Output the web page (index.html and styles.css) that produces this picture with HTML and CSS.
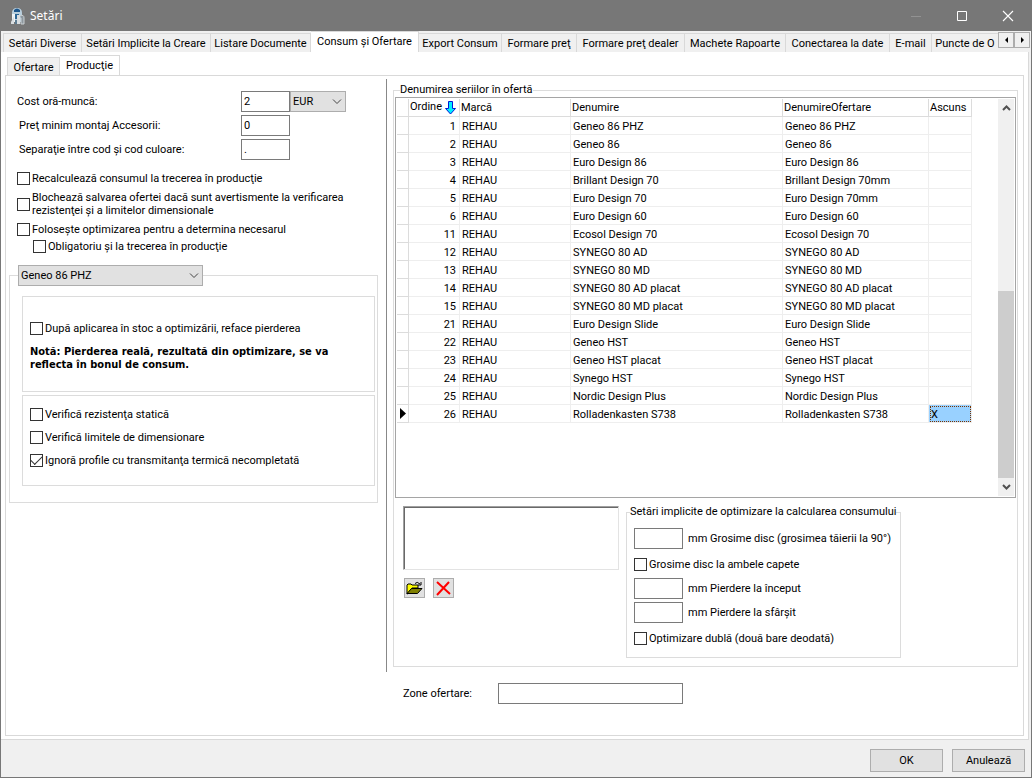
FILE: index.html
```html
<!DOCTYPE html>
<html lang="ro">
<head>
<meta charset="utf-8">
<title>Setări</title>
<link rel="stylesheet" href="styles.css">
</head>
<body>
<div class="window">
  <header class="titlebar">
    <svg class="app-icon" width="16" height="18" viewBox="0 0 16 18"><path d="M2 6Q2 1 7 1Q12 1 12 6V15H2Z" fill="#b9cfdd"/><path d="M4 3Q7 0 10 3V5H4Z" fill="#1c568c"/><path d="M2 7h3v8H2z" fill="#eef3f6"/><path d="M5 7h4v5H5z" fill="#2c6696"/><path d="M1 15L4 9V17H1ZM7 8h3v9H7z" fill="#d9dde0"/><path d="M10 9Q14 7 14 11V17H11V11" fill="#8d979e" stroke="#c9cfd2"/><path d="M5 13h2v4H5z" fill="#5d7c92"/></svg>
    <h1 class="title">Setări</h1>
    <div class="window-buttons">
      <button class="window-button" aria-label="Minimizare"><svg width="12" height="12" viewBox="0 0 12 12"><path d="M1 6.500H11" stroke="#929292"/></svg></button>
      <button class="window-button" aria-label="Maximizare"><svg width="12" height="12" viewBox="0 0 12 12"><path d="M1.500 1.500H10.500V10.500H1.500Z" fill="none" stroke="#fff"/></svg></button>
      <button class="window-button" aria-label="Închidere"><svg width="12" height="12" viewBox="0 0 12 12"><path d="M1 1L11 11M11 1L1 11" fill="none" stroke="#fff" stroke-width="1.100"/></svg></button>
    </div>
  </header>

  <nav class="main-tabs">
    <div class="tab-strip" role="tablist">
      <button class="tab" role="tab">Setări Diverse</button>
      <button class="tab" role="tab">Setări Implicite la Creare</button>
      <button class="tab" role="tab">Listare Documente</button>
      <button class="tab tab-active" role="tab" aria-selected="true">Consum şi Ofertare</button>
      <button class="tab" role="tab">Export Consum</button>
      <button class="tab" role="tab">Formare preţ</button>
      <button class="tab" role="tab">Formare preţ dealer</button>
      <button class="tab" role="tab">Machete Rapoarte</button>
      <button class="tab" role="tab">Conectarea la date</button>
      <button class="tab" role="tab">E-mail</button>
      <button class="tab" role="tab">Puncte de O</button>
    </div>
    <div class="tab-scroll">
      <button class="scroll-button" aria-label="Înapoi"><svg width="5" height="8" viewBox="0 0 5 8"><path d="M4 1V7L1 4Z"/></svg></button>
      <button class="scroll-button" aria-label="Înainte"><svg width="5" height="8" viewBox="0 0 5 8"><path d="M1 1V7L4 4Z"/></svg></button>
    </div>
  </nav>

  <main class="page">
    <div class="sub-tabs" role="tablist">
      <button class="tab" role="tab">Ofertare</button>
      <button class="tab tab-active" role="tab" aria-selected="true">Producţie</button>
    </div>
    <div class="sub-page">
      <section class="left">
        <div class="costs">
          <label for="cost">Cost oră-muncă:</label>
          <div class="cost-fields">
            <input class="field" id="cost" value="2">
            <div class="combo combo-currency"><select aria-label="Moneda"><option>EUR</option></select><svg width="10" height="6" viewBox="0 0 10 6"><path d="M1 0.500L5 4.500L9 0.500"/></svg></div>
          </div>
          <label class="cost-label" for="montaj">Preţ minim montaj Accesorii:</label>
          <input class="field" id="montaj" value="0">
          <label class="cost-label" for="sep">Separaţie între cod şi cod culoare:</label>
          <input class="field" id="sep" value=".">
        </div>
        <div class="options">
          <label class="check"><input type="checkbox">Recalculează consumul la trecerea în producţie</label>
          <label class="check check-tall"><input type="checkbox"><span>Blochează salvarea ofertei dacă sunt avertismente la verificarea<br>rezistenţei şi a limitelor dimensionale</span></label>
          <label class="check"><input type="checkbox">Foloseşte optimizarea pentru a determina necesarul</label>
          <label class="check check-nested"><input type="checkbox">Obligatoriu şi la trecerea în producţie</label>
        </div>
        <fieldset class="group series-group">
          <legend><div class="combo"><select aria-label="Serie"><option>Geneo 86 PHZ</option></select><svg width="10" height="6" viewBox="0 0 10 6"><path d="M1 0.500L5 4.500L9 0.500"/></svg></div></legend>
          <div class="box loss-box">
            <label class="check"><input type="checkbox">După aplicarea în stoc a optimizării, reface pierderea</label>
            <p class="note">Notă: Pierderea reală, rezultată din optimizare, se va<br>reflecta în bonul de consum.</p>
          </div>
          <div class="box verify-box">
            <label class="check"><input type="checkbox">Verifică rezistenţa statică</label>
            <label class="check"><input type="checkbox">Verifică limitele de dimensionare</label>
            <label class="check"><input type="checkbox" checked>Ignoră profile cu transmitanţa termică necompletată</label>
          </div>
        </fieldset>
      </section>

      <section class="right">
        <fieldset class="group names-group">
          <legend>Denumirea seriilor în ofertă</legend>
          <div class="grid-frame">
            <div class="grid-area">
              <table class="grid">
                <colgroup><col class="col-mark"><col class="col-order"><col class="col-brand"><col class="col-name"><col class="col-offer"><col class="col-hidden"></colgroup>
                <thead><tr><th></th><th>Ordine <svg class="sort" width="11" height="14" viewBox="0 0 11 14"><path d="M3.500 0.500H7.500V7.500H10.500L5.500 13L0.500 7.500H3.500Z" fill="#00f0ff" stroke="#0018d8"/></svg></th><th>Marcă</th><th>Denumire</th><th>DenumireOfertare</th><th>Ascuns</th></tr></thead>
                <tbody>
                  <tr><td></td><td>1</td><td>REHAU</td><td>Geneo 86 PHZ</td><td>Geneo 86 PHZ</td><td></td></tr>
                  <tr><td></td><td>2</td><td>REHAU</td><td>Geneo 86</td><td>Geneo 86</td><td></td></tr>
                  <tr><td></td><td>3</td><td>REHAU</td><td>Euro Design 86</td><td>Euro Design 86</td><td></td></tr>
                  <tr><td></td><td>4</td><td>REHAU</td><td>Brillant Design 70</td><td>Brillant Design 70mm</td><td></td></tr>
                  <tr><td></td><td>5</td><td>REHAU</td><td>Euro Design 70</td><td>Euro Design 70mm</td><td></td></tr>
                  <tr><td></td><td>6</td><td>REHAU</td><td>Euro Design 60</td><td>Euro Design 60</td><td></td></tr>
                  <tr><td></td><td>11</td><td>REHAU</td><td>Ecosol Design 70</td><td>Ecosol Design 70</td><td></td></tr>
                  <tr><td></td><td>12</td><td>REHAU</td><td>SYNEGO 80 AD</td><td>SYNEGO 80 AD</td><td></td></tr>
                  <tr><td></td><td>13</td><td>REHAU</td><td>SYNEGO 80 MD</td><td>SYNEGO 80 MD</td><td></td></tr>
                  <tr><td></td><td>14</td><td>REHAU</td><td>SYNEGO 80 AD placat</td><td>SYNEGO 80 AD placat</td><td></td></tr>
                  <tr><td></td><td>15</td><td>REHAU</td><td>SYNEGO 80 MD placat</td><td>SYNEGO 80 MD placat</td><td></td></tr>
                  <tr><td></td><td>21</td><td>REHAU</td><td>Euro Design Slide</td><td>Euro Design Slide</td><td></td></tr>
                  <tr><td></td><td>22</td><td>REHAU</td><td>Geneo HST</td><td>Geneo HST</td><td></td></tr>
                  <tr><td></td><td>23</td><td>REHAU</td><td>Geneo HST placat</td><td>Geneo HST placat</td><td></td></tr>
                  <tr><td></td><td>24</td><td>REHAU</td><td>Synego HST</td><td>Synego HST</td><td></td></tr>
                  <tr><td></td><td>25</td><td>REHAU</td><td>Nordic Design Plus</td><td>Nordic Design Plus</td><td></td></tr>
                  <tr><td><svg class="marker" width="6" height="11" viewBox="0 0 6 11"><path d="M0 0L6 5.500L0 11Z"/></svg></td><td>26</td><td>REHAU</td><td>Rolladenkasten S738</td><td>Rolladenkasten S738</td><td class="cell-selected">X</td></tr>
                </tbody>
              </table>
            </div>
            <div class="scrollbar">
              <svg width="9" height="6" viewBox="0 0 9 6"><path d="M1 5L4.500 1.500L8 5"/></svg>
              <div class="thumb"></div>
              <svg width="9" height="6" viewBox="0 0 9 6"><path d="M1 1L4.500 4.500L8 1"/></svg>
            </div>
          </div>
          <div class="lower">
            <div class="files">
              <div class="file-list" role="listbox" aria-label="Fişiere"></div>
              <div class="file-buttons">
                <button class="tool" aria-label="Deschide"><svg width="17" height="14" viewBox="0 0 17 14"><path d="M1 13V4L2 3H5L6 4H12V7H6L1.500 13Z" fill="#ff0" stroke="#000"/><path d="M5.500 7.500H16L11.500 12.500H1Z" fill="#808000" stroke="#000"/><path d="M9 2.500Q11 0 14 3M15 1V4H12" fill="none" stroke="#000"/></svg></button>
                <button class="tool" aria-label="Şterge"><svg width="15" height="15" viewBox="0 0 15 15"><path d="M1 1L14 13M13 1L1 14" fill="none" stroke="#f00" stroke-width="2"/></svg></button>
              </div>
            </div>
            <fieldset class="group optim-group">
              <legend>Setări implicite de optimizare la calcularea consumului</legend>
              <div class="optim-row"><input class="field" id="disc"><label for="disc">mm Grosime disc (grosimea tăierii la 90°)</label></div>
              <label class="check"><input type="checkbox">Grosime disc la ambele capete</label>
              <div class="optim-row"><input class="field" id="inc"><label for="inc">mm Pierdere la început</label></div>
              <div class="optim-row"><input class="field" id="sf"><label for="sf">mm Pierdere la sfârşit</label></div>
              <label class="check"><input type="checkbox">Optimizare dublă (două bare deodată)</label>
            </fieldset>
          </div>
        </fieldset>
        <div class="zone"><label for="zone">Zone ofertare:</label><input class="field zone-field" id="zone"></div>
      </section>
    </div>
  </main>

  <footer class="actions">
    <button class="action">OK</button>
    <button class="action">Anulează</button>
  </footer>
</div>
</body>
</html>
```
FILE: styles.css
```css
* { box-sizing: border-box; }

body {
  margin: 0;
  font: 11px/13px Tahoma, Roboto, sans-serif;
  color: #000;
}

button, input, select { font: inherit; color: inherit; margin: 0; border-radius: 0; }
button { padding: 0; }
label, legend, button { white-space: nowrap; }

.window {
  display: flex;
  flex-direction: column;
  min-height: 100vh;
  border: 1px solid #777;
  background: #f0f0f0;
}

/* Title bar */
.titlebar {
  display: flex;
  align-items: center;
  height: 30px;
  padding-left: 9px;
  background: #777;
  color: #fff;
}
.title { margin: 0 0 0 4px; font: 12px/16px "Noto Sans", sans-serif; }
.window-buttons { display: flex; margin-left: auto; }
.window-button {
  display: grid;
  place-items: center;
  width: 46px;
  height: 28px;
  border: 0;
  background: none;
}

/* Tabs */
.main-tabs { display: flex; align-items: flex-end; height: 21px; padding-left: 2px; }
.tab-strip {
  display: grid;
  grid-template-columns: 79px 129px 100px 108px 83px 75px 108px 101px 104px 42px 67px;
  align-items: end;
  flex: 1;
  min-width: 0;
  overflow: hidden;
}
.tab {
  height: 19px;
  padding: 1px 0 0;
  border: 1px solid #d9d9d9;
  border-width: 1px 1px 0 0;
  background: #f0f0f0;
}
.tab:first-child { border-left-width: 1px; }
.tab-active { height: 21px; padding: 0 0 2px; background: #fff; }
.tab-scroll { display: flex; align-self: flex-start; margin: 1px 1px 0 0; }
.scroll-button {
  display: grid;
  place-items: center;
  width: 16px;
  height: 16px;
  border: 1px solid #adadad;
  background: #f0f0f0;
}
.sub-tabs {
  display: grid;
  grid-template-columns: 53px 60px;
  align-items: end;
  height: 20px;
  margin: 3px 0 0 2px;
}
.page {
  display: flex;
  flex-direction: column;
  flex: 1;
  margin-right: 2px;
  padding: 0 4px 3px;
  border: 1px solid #d9d9d9;
  border-width: 0 1px 1px 0;
  background: #fff;
}
.sub-page {
  display: flex;
  gap: 6px;
  flex: 1;
  padding: 3px 5px 28px 3px;
  border: 1px solid #d9d9d9;
}

/* Shared controls */
.field {
  width: 49px;
  height: 21px;
  padding: 0 2px;
  border: 1px solid #7a7a7a;
  background: #fff;
}
.combo { position: relative; width: 185px; height: 21px; }
.combo select {
  width: 100%;
  height: 100%;
  padding: 0 2px;
  border: 1px solid #adadad;
  background: #e1e1e1;
  appearance: none;
}
.combo svg {
  position: absolute;
  right: 4px;
  top: 8px;
  fill: none;
  stroke: #444;
  pointer-events: none;
}
.check { display: flex; align-items: center; gap: 2px; height: 17px; }
.check input {
  display: grid;
  place-items: center;
  flex: none;
  width: 13px;
  height: 13px;
  border: 1px solid #333;
  background: #fff;
  appearance: none;
}
.check input:checked::before {
  content: "";
  width: 10px;
  height: 5px;
  border: solid #333;
  border-width: 0 0 1px 1px;
  transform: translateY(-2px) rotate(-45deg);
}
.group { margin: 0; padding: 0; border: 1px solid #dcdcdc; min-width: 0; }
.group legend { padding: 0; line-height: 14px; }

/* Left column */
.left {
  flex: none;
  width: 378px;
  align-self: flex-start;
  min-height: 593px;
  padding: 12px 8px 0 0;
  border-right: 1px solid #888;
}
.costs {
  display: grid;
  grid-template-columns: 224px auto;
  row-gap: 3px;
  align-items: center;
  padding-left: 8px;
}
.cost-label { padding-left: 2px; }
.cost-fields { display: flex; }
.combo-currency { width: 56px; }
.options { padding: 10px 0 0 8px; }
.check-tall { height: 34px; }
.check-nested { margin-left: 16px; }
.series-group { margin-top: 10px; padding: 10px 2px 16px 8px; }
.box { margin-left: 4px; border: 1px solid #dcdcdc; padding-left: 7px; }
.loss-box { height: 96px; padding-top: 23px; }
.note { margin: 8px 0 0; font-family: Tahoma, "DejaVu Sans Condensed", sans-serif; font-weight: bold; }
.verify-box { height: 91px; margin-top: 3px; padding-top: 10px; }
.verify-box .check { margin-bottom: 6px; }

/* Right column */
.right { flex: 1; min-width: 0; padding-top: 4px; }
.names-group > legend { margin-left: 6px; }
.grid-frame {
  display: flex;
  height: 401px;
  margin: 0 1px;
  border: 1px solid #a5a5a5;
  padding: 1px;
}
.grid-area { flex: 1; min-width: 0; overflow: hidden; }
.grid { width: 575px; table-layout: fixed; border-spacing: 0; }
.col-mark { width: 12px; }
.col-order { width: 51px; }
.col-brand { width: 111px; }
.col-name { width: 212px; }
.col-offer { width: 146px; }
.col-hidden { width: 43px; }
.grid th, .grid td {
  height: 18px;
  padding: 2px 2px 0;
  border: 1px solid #eee;
  border-width: 0 1px 1px 0;
  font-weight: normal;
  text-align: left;
  white-space: nowrap;
}
.grid th { padding: 0 0 0 1px; border-color: #dcdcdc; }
.grid td:first-child { padding: 0; border-color: #dcdcdc; }
.grid td:nth-child(2) { text-align: right; padding-right: 3px; }
.sort, .marker { vertical-align: middle; }
.marker { display: block; margin-left: 3px; }
.grid .cell-selected { background: #99d1ff; outline: 1px dotted #7a3300; outline-offset: -2px; }
.scrollbar {
  display: flex;
  flex-direction: column;
  align-items: center;
  width: 16px;
  padding: 6px 0;
  background: #f0f0f0;
}
.scrollbar svg { flex: none; fill: none; stroke: #505050; stroke-width: 2; }
.thumb { width: 16px; height: 187px; margin: auto 0 6px; background: #cdcdcd; }

.lower { display: flex; gap: 7px; padding: 7px 0 8px 9px; }
.files { padding-top: 1px; }
.file-list {
  width: 216px;
  height: 64px;
  border: 1px solid #e3e3e3;
  border-top-color: #a0a0a0;
  border-left-color: #a0a0a0;
  box-shadow: inset 1px 1px #696969;
}
.file-buttons { display: flex; gap: 8px; padding: 8px 1px; }
.tool {
  display: grid;
  place-items: center;
  width: 21px;
  height: 20px;
  border: 1px solid #adadad;
  background: #e1e1e1;
}
.optim-group { width: 275px; padding: 9px 0 5px 7px; }
.optim-group > legend { margin-left: -4px; }
.optim-row { display: flex; align-items: center; gap: 5px; margin-bottom: 3px; }
.optim-row + .check { margin: 7px 0 5px; }
.zone { display: flex; align-items: center; padding: 16px 0 0 10px; }
.zone label { width: 95px; }
.zone-field { width: 185px; }

/* Bottom buttons */
.actions {
  display: flex;
  justify-content: flex-end;
  gap: 9px;
  padding: 9px 6px 5px;
}
.action {
  width: 73px;
  height: 23px;
  border: 1px solid #adadad;
  background: #e1e1e1;
}
```
